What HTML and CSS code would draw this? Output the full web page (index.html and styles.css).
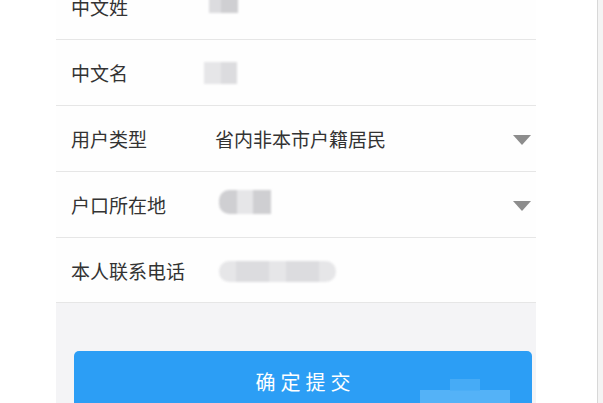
FILE: index.html
```html
<!DOCTYPE html>
<html lang="zh">
<head>
<meta charset="utf-8">
<link rel="stylesheet" href="styles.css">
</head>
<body>
<div class="screen">
  <div class="left-gap"></div>
  <div class="phone">
    <div class="form">
      <div class="row">
        <span class="label">中文姓</span>
        <span class="mosaic m1"><i class="c2"></i><i class="c3"></i></span>
      </div>
      <div class="row">
        <span class="label">中文名</span>
        <span class="mosaic m2"><i class="c1"></i><i class="c2"></i></span>
      </div>
      <div class="row">
        <span class="label">用户类型</span>
        <span class="value">省内非本市户籍居民</span>
        <span class="arrow"></span>
      </div>
      <div class="row">
        <span class="label">户口所在地</span>
        <span class="mosaic m4"><i class="c3"></i><i class="c1"></i><i class="c3"></i></span>
        <span class="arrow"></span>
      </div>
      <div class="row">
        <span class="label">本人联系电话</span>
        <span class="mosaic m5"><i class="c1"></i><i class="c2"></i><i class="c1"></i><i class="c2"></i><i class="c1"></i></span>
      </div>
    </div>
    <div class="footer">
      <button class="submit">确定提交<span class="btn-mosaic"></span><span class="btn-mosaic top"></span></button>
    </div>
  </div>
  <div class="right-gap"></div>
  <div class="scroll-edge"></div>
</div>
</body>
</html>
```
FILE: styles.css
```css
html, body {
  margin: 0;
  padding: 0;
  background: #ffffff;
  overflow: hidden;
}
.screen {
  display: flex;
  width: 603px;
  height: 403px;
  overflow: hidden;
  font-family: "Noto Sans CJK SC", "Noto Sans", sans-serif;
}
.left-gap {
  width: 56px;
  flex: none;
}
.phone {
  width: 480px;
  flex: none;
  display: flex;
  flex-direction: column;
  margin-top: -26px;
}
.form {
  background: #fefefe;
}
.row {
  height: 65px;
  border-bottom: 1px solid #e6e6e6;
  display: flex;
  align-items: center;
  padding: 0 5px 0 15px;
}
.row:last-child {
  height: 64px;
}
.label {
  width: 144px;
  flex: none;
  font-size: 19px;
  color: #333333;
  line-height: 1;
}
.value {
  flex: 1;
  font-size: 19px;
  color: #333333;
  line-height: 1;
}
.arrow {
  margin-left: auto;
  width: 0;
  height: 0;
  border-left: 9.5px solid transparent;
  border-right: 9.5px solid transparent;
  border-top: 10px solid #8d8d8d;
  margin-top: 3px;
}
.mosaic {
  display: flex;
  height: 22px;
  filter: blur(1px);
}
.mosaic i {
  display: block;
  height: 100%;
}
.c1 { background: #e6e6e8; }
.c2 { background: #dcdcdf; }
.c3 { background: #cfcfd2; }
.m1 {
  margin-left: -6px;
  margin-top: -12px;
  height: 24px;
}
.m1 .c2 { width: 12px; }
.m1 .c3 { width: 17px; }
.m2 {
  margin-left: -11px;
  height: 22px;
}
.m2 .c1 { width: 17px; }
.m2 .c2 { width: 16px; }
.m4 {
  margin-left: 4px;
  margin-top: -6px;
  height: 24px;
  border-radius: 10px 0 0 10px;
  overflow: hidden;
}
.m4 .c3:first-child { width: 18px; }
.m4 .c1 { width: 16px; }
.m4 .c3:last-child { width: 18px; }
.m5 {
  margin-left: 4px;
  margin-top: 2px;
  height: 21px;
  border-radius: 10px;
  overflow: hidden;
}
.m5 .c1 { width: 17px; }
.m5 .c2 { width: 33px; }
.footer {
  flex: 1;
  background: #f4f4f6;
  padding: 48px 4px 0 18px;
}
.submit {
  position: relative;
  display: block;
  width: 100%;
  height: 60px;
  border: none;
  border-radius: 5px;
  background: #2c9ef5;
  color: #ffffff;
  font-family: "Noto Sans CJK SC", "Noto Sans", sans-serif;
  font-size: 20px;
  letter-spacing: 5px;
  padding: 0 0 0 5px;
  overflow: hidden;
}
.btn-mosaic {
  position: absolute;
  left: 346px;
  top: 39px;
  width: 90px;
  height: 30px;
  background: #5cb5f7;
  opacity: 0.85;
}
.btn-mosaic.top {
  left: 376px;
  top: 28px;
  width: 30px;
  height: 12px;
  background: #4badf6;
}
.right-gap {
  width: 61px;
  flex: none;
}
.scroll-edge {
  flex: 1;
  border-left: 1px solid #d8d8d8;
  background: #f4f4f4;
}
```
